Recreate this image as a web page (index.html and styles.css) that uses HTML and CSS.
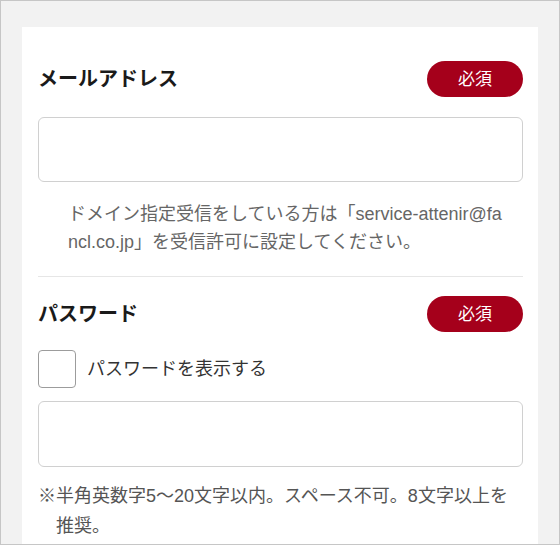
FILE: index.html
```html
<!DOCTYPE html>
<html lang="ja">
<head>
<meta charset="utf-8">
<title>会員登録</title>
<link rel="stylesheet" href="styles.css">
</head>
<body>
<div class="frame">
  <div class="card">
    <section class="field">
      <div class="field-head">
        <h2 class="field-title">メールアドレス</h2>
        <span class="req">必須</span>
      </div>
      <input class="text-input" type="email" aria-label="メールアドレス">
      <p class="help">ドメイン指定受信をしている方は「service-attenir@fancl.co.jp」を受信許可に設定してください。</p>
    </section>
    <hr class="divider">
    <section class="field field-pw">
      <div class="field-head">
        <h2 class="field-title">パスワード</h2>
        <span class="req">必須</span>
      </div>
      <label class="check">
        <span class="check-box"></span>
        <span class="check-text">パスワードを表示する</span>
      </label>
      <input class="text-input text-input-pw" type="password" aria-label="パスワード">
      <p class="note">※半角英数字5〜20文字以内。スペース不可。8文字以上を推奨。</p>
    </section>
  </div>
</div>
</body>
</html>
```

FILE: styles.css
```css
* { box-sizing: border-box; }

html, body {
  margin: 0;
  padding: 0;
}

body {
  font-family: "Liberation Sans", "Noto Sans CJK JP", sans-serif;
  color: #333;
}

.frame {
  width: 560px;
  height: 545px;
  border: 1px solid #c6c6c6;
  background: #f2f2f2;
  padding: 26px 21px 0 21px;
  overflow: hidden;
}

.card {
  background: #fff;
  height: 100%;
  padding: 34px 15px 0 16px;
}

.field-head {
  display: flex;
  align-items: center;
  justify-content: space-between;
  height: 36px;
}

.field-title {
  margin: 0;
  font-size: 20px;
  font-weight: bold;
  color: #1a1a1a;
  line-height: 1;
}

.req {
  display: flex;
  align-items: center;
  justify-content: center;
  width: 96px;
  height: 36px;
  border-radius: 18px;
  background: #a5001b;
  color: #fff;
  font-size: 17px;
  line-height: 1;
}

.text-input {
  display: block;
  width: 100%;
  height: 65px;
  margin: 20px 0 0 0;
  border: 1.5px solid #d0d0d0;
  border-radius: 6px;
  background: #fff;
  -webkit-appearance: none;
  appearance: none;
  outline: none;
}

.help {
  margin: 18px 0 0 0;
  padding: 0 12px 0 30px;
  font-size: 18px;
  line-height: 28px;
  color: #666;
  word-break: break-all;
}

.divider {
  margin: 20px 0 0 0;
  border: 0;
  height: 1px;
  background: #e6e6e6;
}

.field-pw {
  margin-top: 19px;
}

.check {
  display: flex;
  align-items: center;
  gap: 11px;
  margin-top: 18px;
}

.check-box {
  display: block;
  width: 38px;
  height: 38px;
  border: 1.5px solid #9c9c9c;
  border-radius: 4px;
  background: #fff;
}

.check-text {
  font-size: 18px;
  color: #333;
  line-height: 1;
}

.text-input-pw {
  margin-top: 13px;
  height: 66px;
}

.note {
  margin: 14px 0 0 0;
  padding-left: 1em;
  text-indent: -1em;
  font-size: 18px;
  line-height: 30px;
  color: #555;
}
```
